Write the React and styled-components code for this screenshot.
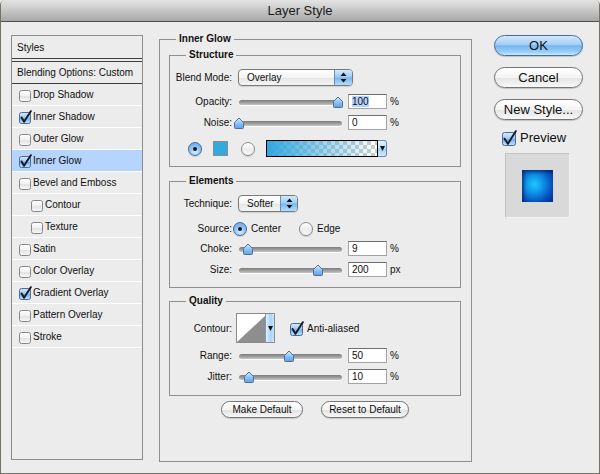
import React, { useId } from "react";
import styled, { createGlobalStyle } from "styled-components";

const GlobalStyle = createGlobalStyle`
  html, body { margin: 0; padding: 0; background: #ececec; }
  body { font-family: "Liberation Sans", Arial, sans-serif; color: #0f0f0f; }
  *, *::before, *::after { box-sizing: border-box; }
`;

const Window = styled.div`
  width: 600px;
  height: 474px;
  display: flex;
  flex-direction: column;
  background: #ececec;
  border: 1px solid #737365;
  border-top: none;
  border-radius: 5px 5px 0 0;
  overflow: hidden;
`;

const TitleBar = styled.div`
  height: 22px;
  flex-shrink: 0;
  border-bottom: 1px solid #4e4e4e;
  background: linear-gradient(#e4e4e4, #c9c9c9 45%, #a7a7a7);
  text-align: center;
  font-size: 13px;
  line-height: 21px;
  color: #1a1a1a;
`;

const Body = styled.div`
  flex: 1;
  display: flex;
  align-items: flex-start;
  padding: 10px 0 0 10px;
`;

/* ---------- left style list ---------- */
const StyleList = styled.div`
  margin-top: 3px;
  width: 132px;
  height: 425px;
  border: 1px solid #8b8b8b;
  display: flex;
  flex-direction: column;
  font-size: 10px;
`;

const ListHeader = styled.div`
  height: 23px;
  display: flex;
  align-items: center;
  padding-left: 5px;
  border-bottom: 1px solid #3f3f3f;
`;

const BlendHeader = styled.div`
  height: 23px;
  margin-top: 2px;
  display: flex;
  align-items: center;
  padding-left: 5px;
  border-top: 1px solid #3f3f3f;
  border-bottom: 1px solid #3f3f3f;
`;

const StyleRow = styled.div`
  height: 22px;
  display: flex;
  align-items: center;
  padding-left: ${(p) => (p.$indent ? 19 : 7)}px;
  border-bottom: 1px solid #ffffff;
  background: ${(p) => (p.$selected ? "#b5d5ff" : "transparent")};
`;

/* ---------- fieldsets ---------- */
const MainGroup = styled.fieldset`
  margin: 0 0 0 16px;
  width: 313px;
  height: 430px;
  min-width: 0;
  border: 1px solid #8f8f8f;
  padding: 2px 10px 0 9px;
  display: flex;
  flex-direction: column;
`;

const Legend = styled.legend`
  font-size: 10px;
  font-weight: bold;
  line-height: 14px;
  padding: 0 3px;
  margin-left: ${(p) => p.$ml}px;
  color: #111;
`;

const Group = styled.fieldset`
  margin: ${(p) => p.$mt}px 0 0 0;
  width: 292px;
  min-width: 0;
  border: 1px solid #8f8f8f;
  padding: ${(p) => p.$pt}px 0 ${(p) => p.$pb}px 0;
  display: flex;
  flex-direction: column;
`;

const Row = styled.div`
  display: flex;
  align-items: center;
  height: ${(p) => p.$h || 17}px;
  margin-top: ${(p) => p.$mt || 0}px;
  font-size: 10px;
`;

const Label = styled.div`
  width: 62px;
  flex-shrink: 0;
  text-align: right;
  font-size: 10px;
  white-space: nowrap;
`;

const Text = styled.span`
  margin-left: ${(p) => p.$ml || 0}px;
  font-size: ${(p) => p.$size || 10}px;
  white-space: nowrap;
`;

/* popup menu */
const Popup = styled.div`
  display: flex;
  width: ${(p) => p.$w}px;
  height: 17px;
  margin-left: 6px;
  border: 1px solid #7a7a7a;
  border-radius: 4px;
  overflow: hidden;
  background: linear-gradient(#ffffff, #f4f4f4 50%, #e6e6e6 51%, #f4f4f4);
  box-shadow: 0 1px 1px rgba(0, 0, 0, 0.12);
`;

const PopupText = styled.div`
  flex: 1;
  padding-left: 8px;
  font-size: 10px;
  line-height: 15px;
`;

const PopupArrows = styled.div`
  width: ${(p) => p.$w}px;
  border-left: 1px solid #6e8cb3;
  background: linear-gradient(#d3e9fd, #9ccbf5 48%, #77b6f0 52%, #b5defd);
  display: flex;
  align-items: center;
  justify-content: center;
`;

/* slider */
const SliderBox = styled.div`
  position: relative;
  width: 104px;
  height: 12px;
  margin-left: 6px;
  flex-shrink: 0;
`;

const Track = styled.div`
  position: absolute;
  left: 1px;
  right: 0;
  top: 4px;
  height: 5px;
  border-radius: 3px;
  background: linear-gradient(#7c7c7c, #9d9d9d 50%, #c6c6c6);
  box-shadow: 0 1px 0 rgba(255, 255, 255, 0.8);
`;

const ThumbSvg = styled.svg`
  position: absolute;
  top: 0;
  left: ${(p) => p.$left}px;
`;

const Field = styled.div`
  width: 39px;
  height: 15px;
  margin-left: 6px;
  flex-shrink: 0;
  background: #fff;
  border: 1px solid #a4a4a4;
  border-top-color: #6e6e6e;
  font-size: 10px;
  line-height: 13px;
  padding-left: 3px;
`;

const Highlight = styled.span`
  background: #b5d5ff;
`;

const Unit = styled.span`
  margin-left: 3px;
  font-size: 10px;
`;

/* radio */
const Radio = styled.span`
  position: relative;
  width: 14px;
  height: 14px;
  flex-shrink: 0;
  margin-left: ${(p) => p.$ml || 0}px;
  border-radius: 50%;
  border: 1px solid ${(p) => (p.$on ? "#4a6a98" : "#8a8a8a")};
  background: ${(p) =>
    p.$on
      ? "radial-gradient(circle at 50% 75%, #d6efff, #86bff1 55%, #5b9ce5)"
      : "linear-gradient(#ffffff, #ececec 55%, #f8f8f8)"};
  box-shadow: 0 1px 1px rgba(0, 0, 0, 0.15);
  &::after {
    content: "";
    display: ${(p) => (p.$on ? "block" : "none")};
    position: absolute;
    left: 4px;
    top: 4px;
    width: 4px;
    height: 4px;
    border-radius: 50%;
    background: #15152a;
  }
`;

const Swatch = styled.span`
  width: 15px;
  height: 15px;
  margin-left: 11px;
  border: 1px solid #8b8b8b;
  background: #33a9df;
  flex-shrink: 0;
`;

const GradientPicker = styled.div`
  display: flex;
  height: 17px;
  margin-left: 11px;
`;

const GradientStrip = styled.div`
  width: 112px;
  border: 1px solid #000;
  background: linear-gradient(to right, #31a8df, rgba(49, 168, 223, 0)),
    repeating-conic-gradient(#cdcdcd 0 25%, #ffffff 0 50%) 0 0 / 8px 8px;
`;

const PickerArrow = styled.div`
  width: 9px;
  border: 1px solid #6b88ad;
  border-left: none;
  border-radius: 0 3px 3px 0;
  background: linear-gradient(#e6f3ff, #b6dafa 50%, #9acdf8 51%, #d2ecff);
  display: flex;
  align-items: center;
  justify-content: center;
`;

const ContourBox = styled.div`
  display: flex;
  width: 39px;
  height: 30px;
  margin-left: 4px;
  border: 1px solid #8a8a8a;
  background: #fff;
`;

const ContourArrow = styled.div`
  width: 9px;
  border-left: 1px solid #7d9cc2;
  border-radius: 0 3px 3px 0;
  background: linear-gradient(to right, #e0f0ff, #a9d4f9 60%, #c6e5ff);
  display: flex;
  align-items: center;
  justify-content: center;
`;

const CheckWrap = styled.span`
  display: inline-flex;
  flex-shrink: 0;
  margin-left: ${(p) => p.$ml || 0}px;
`;

const ButtonRow = styled.div`
  display: flex;
  justify-content: center;
  gap: 18px;
  margin-top: 5px;
`;

const SmallButton = styled.div`
  width: ${(p) => p.$w}px;
  height: 17px;
  border: 1px solid #767676;
  border-radius: 9px;
  background: linear-gradient(#ffffff, #f3f3f3 50%, #e2e2e2 51%, #f7f7f7);
  box-shadow: 0 1px 1px rgba(0, 0, 0, 0.15);
  font-size: 10px;
  line-height: 15px;
  text-align: center;
`;

/* right column */
const SideColumn = styled.div`
  margin: 3px 0 0 22px;
  width: 89px;
  display: flex;
  flex-direction: column;
`;

const AquaButton = styled.div`
  height: 21px;
  margin-top: ${(p) => p.$mt || 0}px;
  border: 1px solid ${(p) => (p.$primary ? "#4a6b98" : "#757575")};
  border-radius: 11px;
  background: ${(p) =>
    p.$primary
      ? "linear-gradient(#d2e8fc, #a2cff6 45%, #78b5ef 52%, #9bd0f9 85%, #c8eeff)"
      : "linear-gradient(#ffffff, #f4f4f4 50%, #e4e4e4 52%, #f8f8f8)"};
  box-shadow: 0 1px 1px rgba(0, 0, 0, 0.18);
  font-size: 13px;
  line-height: 19px;
  text-align: center;
  color: #111;
`;

const PreviewRow = styled.div`
  display: flex;
  align-items: center;
  height: 15px;
  margin: 10px 0 0 8px;
`;

const PreviewBox = styled.div`
  width: 65px;
  height: 65px;
  margin: 8px 0 0 11px;
  background: #d9d9d9;
  border: 1px solid #c4c4c4;
  border-right-color: #f2f2f2;
  border-bottom-color: #f2f2f2;
  display: flex;
  align-items: center;
  justify-content: center;
`;

const PreviewSquare = styled.div`
  width: 31px;
  height: 32px;
  background: radial-gradient(
      circle at 40% 45%,
      #1fc4ff 0%,
      #12a8f0 22%,
      #0a78d8 48%,
      #0646b4 75%,
      #052e86 100%
    );
  box-shadow: inset 2px 2px 3px rgba(4, 22, 70, 0.55);
`;

/* ---------- drawings ---------- */
const cleanId = (id) => id.replace(/[^a-zA-Z0-9]/g, "");

function CheckBox({ checked, size = 12, ml }) {
  const id = cleanId(useId());
  const s = size;
  return (
    <CheckWrap $ml={ml}>
      <svg width={s + 2} height={s + 2} viewBox={`0 0 ${s + 2} ${s + 2}`}>
        <defs>
          <linearGradient id={`cb${id}`} x1="0" y1="0" x2="0" y2="1">
            {checked ? (
              <>
                <stop offset="0" stopColor="#d9ecfd" />
                <stop offset="0.48" stopColor="#98c9f4" />
                <stop offset="0.52" stopColor="#70b0ef" />
                <stop offset="1" stopColor="#c2e6ff" />
              </>
            ) : (
              <>
                <stop offset="0" stopColor="#ffffff" />
                <stop offset="0.5" stopColor="#f1f1f1" />
                <stop offset="0.52" stopColor="#e3e3e3" />
                <stop offset="1" stopColor="#f8f8f8" />
              </>
            )}
          </linearGradient>
        </defs>
        <rect
          x="0.5"
          y="2.5"
          width={s - 1}
          height={s - 1}
          rx="2"
          fill={`url(#cb${id})`}
          stroke={checked ? "#4b6b98" : "#878787"}
        />
        {checked && (
          <path
            d={`M2.6 ${s * 0.62} L${s * 0.42} ${s - 0.2} L${s - 0.2} 1.2`}
            fill="none"
            stroke="#1a1a26"
            strokeWidth="2"
            strokeLinecap="round"
            strokeLinejoin="round"
          />
        )}
      </svg>
    </CheckWrap>
  );
}

function Slider({ pct }) {
  const id = cleanId(useId());
  const center = 1 + pct * 99;
  return (
    <SliderBox>
      <Track />
      <ThumbSvg $left={center - 6} width="12" height="12" viewBox="0 0 12 12">
        <defs>
          <linearGradient id={`th${id}`} x1="0" y1="0" x2="0" y2="1">
            <stop offset="0" stopColor="#d8edff" />
            <stop offset="0.5" stopColor="#8fc4f4" />
            <stop offset="1" stopColor="#5d9fe6" />
          </linearGradient>
        </defs>
        <path
          d="M1.5 5.5 L6 1 L10.5 5.5 L10.5 10.5 Q10.5 11.5 9.5 11.5 L2.5 11.5 Q1.5 11.5 1.5 10.5 Z"
          fill={`url(#th${id})`}
          stroke="#4c6f9c"
          strokeWidth="1"
          strokeLinejoin="round"
        />
      </ThumbSvg>
    </SliderBox>
  );
}

const UpDown = () => (
  <svg width="7" height="11" viewBox="0 0 7 11">
    <path d="M3.5 0.5 L6.5 4 L0.5 4 Z" fill="#111" />
    <path d="M3.5 10.5 L6.5 7 L0.5 7 Z" fill="#111" />
  </svg>
);

const DownTri = () => (
  <svg width="5" height="7" viewBox="0 0 5 7">
    <path d="M0 1 L5 1 L2.5 6 Z" fill="#111" />
  </svg>
);

const ContourCurve = () => (
  <svg width="28" height="28" viewBox="0 0 28 28">
    <path d="M0 28 L28 2 L28 28 Z" fill="#8e8e8e" />
  </svg>
);

function SliderRow({ label, pct, value, unit = "%", mt, selected }) {
  return (
    <Row $mt={mt}>
      <Label>{label}</Label>
      <Slider pct={pct} />
      <Field>{selected ? <Highlight>{value}</Highlight> : value}</Field>
      <Unit>{unit}</Unit>
    </Row>
  );
}

const styleItems = [
  { name: "Drop Shadow" },
  { name: "Inner Shadow", checked: true },
  { name: "Outer Glow" },
  { name: "Inner Glow", checked: true, selected: true },
  { name: "Bevel and Emboss" },
  { name: "Contour", indent: true },
  { name: "Texture", indent: true },
  { name: "Satin" },
  { name: "Color Overlay" },
  { name: "Gradient Overlay", checked: true },
  { name: "Pattern Overlay" },
  { name: "Stroke" },
];

export default function App() {
  return (
    <>
      <GlobalStyle />
      <Window>
        <TitleBar>Layer Style</TitleBar>
        <Body>
          <StyleList>
            <ListHeader>Styles</ListHeader>
            <BlendHeader>Blending Options: Custom</BlendHeader>
            {styleItems.map((it) => (
              <StyleRow key={it.name} $indent={it.indent} $selected={it.selected}>
                <CheckBox checked={it.checked} />
                <Text>{it.name}</Text>
              </StyleRow>
            ))}
          </StyleList>

          <MainGroup>
            <Legend $ml={7}>Inner Glow</Legend>

            <Group $mt={0} $pt={7} $pb={9}>
              <Legend $ml={16}>Structure</Legend>
              <Row>
                <Label>Blend Mode:</Label>
                <Popup $w={115}>
                  <PopupText>Overlay</PopupText>
                  <PopupArrows $w={18}>
                    <UpDown />
                  </PopupArrows>
                </Popup>
              </Row>
              <SliderRow label="Opacity:" pct={1} value="100" mt={7} selected />
              <SliderRow label="Noise:" pct={0} value="0" mt={4} />
              <Row $mt={9}>
                <Radio $on $ml={18} />
                <Swatch />
                <Radio $ml={13} />
                <GradientPicker>
                  <GradientStrip />
                  <PickerArrow>
                    <DownTri />
                  </PickerArrow>
                </GradientPicker>
              </Row>
            </Group>

            <Group $mt={7} $pt={7} $pb={9}>
              <Legend $ml={16}>Elements</Legend>
              <Row>
                <Label>Technique:</Label>
                <Popup $w={60}>
                  <PopupText>Softer</PopupText>
                  <PopupArrows $w={17}>
                    <UpDown />
                  </PopupArrows>
                </Popup>
              </Row>
              <Row $mt={8}>
                <Label>Source:</Label>
                <Radio $on $ml={1} />
                <Text $ml={4}>Center</Text>
                <Radio $ml={18} />
                <Text $ml={4}>Edge</Text>
              </Row>
              <SliderRow label="Choke:" pct={0.09} value="9" mt={3} />
              <SliderRow label="Size:" pct={0.8} value="200" unit="px" mt={4} />
            </Group>

            <Group $mt={6} $pt={5} $pb={10}>
              <Legend $ml={16}>Quality</Legend>
              <Row $h={30}>
                <Label>Contour:</Label>
                <ContourBox>
                  <ContourCurve />
                  <ContourArrow>
                    <DownTri />
                  </ContourArrow>
                </ContourBox>
                <CheckBox checked size={13} ml={15} />
                <Text $ml={2}>Anti-aliased</Text>
              </Row>
              <SliderRow label="Range:" pct={0.5} value="50" mt={4} />
              <SliderRow label="Jitter:" pct={0.1} value="10" mt={4} />
            </Group>

            <ButtonRow>
              <SmallButton $w={82}>Make Default</SmallButton>
              <SmallButton $w={88}>Reset to Default</SmallButton>
            </ButtonRow>
          </MainGroup>

          <SideColumn>
            <AquaButton $primary>OK</AquaButton>
            <AquaButton $mt={11}>Cancel</AquaButton>
            <AquaButton $mt={11}>New Style...</AquaButton>
            <PreviewRow>
              <CheckBox checked size={14} />
              <Text $ml={2} $size={13}>Preview</Text>
            </PreviewRow>
            <PreviewBox>
              <PreviewSquare />
            </PreviewBox>
          </SideColumn>
        </Body>
      </Window>
    </>
  );
}
